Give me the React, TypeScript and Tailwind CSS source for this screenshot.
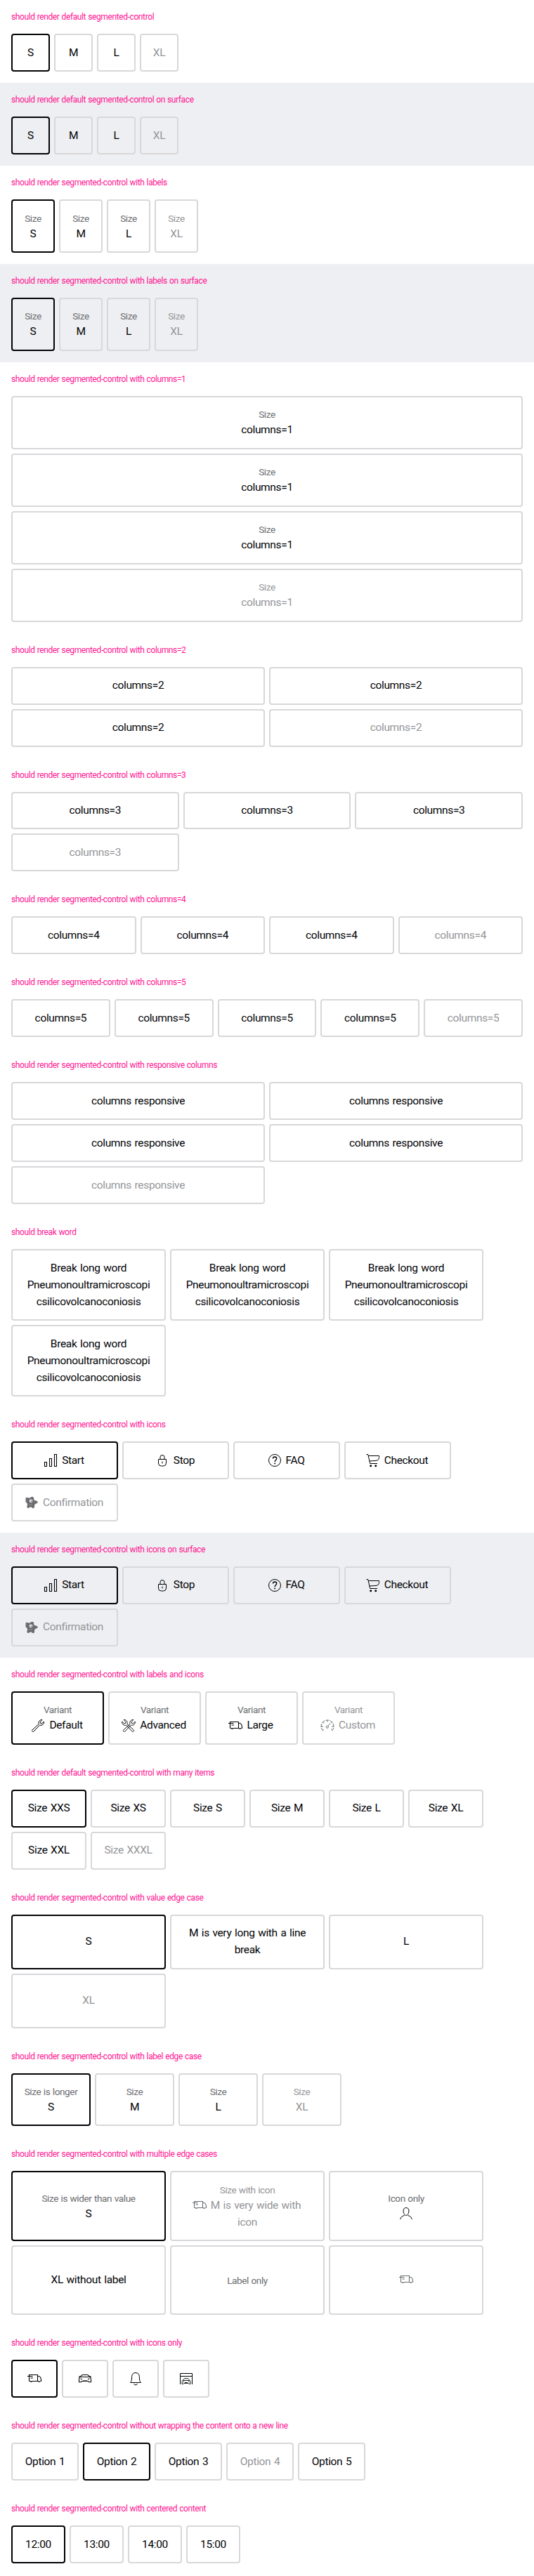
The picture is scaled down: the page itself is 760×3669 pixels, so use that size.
import type { ReactNode } from "react";
import clsx from "clsx";

type IconName =
  | "chart" | "lock" | "question" | "cart" | "star" | "wrench" | "wrenches"
  | "truck" | "gauge" | "user" | "car" | "bell" | "garage";

const wrenchPath =
  "M13.2 9.6c-.6-2.2 0-4 1.4-5.2 1-.8 2.2-1.1 3.400-.9l-2.700 2.900.4 2 2 .4 2.700-2.800c.4 1.500 0 3-1.200 4.100-1.300 1.200-3 1.500-4.700 1L6.100 20c-.6.6-1.500.6-2.100 0s-.6-1.500 0-2.100z";

const icons: Record<IconName, ReactNode> = {
  chart: (
    <path d="M3.5 14.500h3v6h-3zM10.500 9.500h3v11h-3zM17.500 3.500h3v17h-3z" strokeWidth="1.100" />
  ),
  lock: (
    <>
      <path d="M6.500 10.500h11v5.500a4 4 0 0 1-4 4h-3a4 4 0 0 1-4-4z" />
      <path d="M9 10.500V7.500a3 3 0 0 1 6 0v3M12 13.500v3" />
    </>
  ),
  question: (
    <>
      <circle cx="12" cy="12" r="8.500" />
      <path d="M9.500 9.600C9.500 8 10.500 7 12.100 7s2.600 1 2.600 2.400c0 2.100-2.500 2.200-2.500 4.600" strokeWidth="1.400" />
      <path d="M11.300 15.500h1.700v1.700h-1.700z" fill="currentColor" stroke="none" />
    </>
  ),
  cart: (
    <>
      <path d="M2.500 3.500h2.200L7.700 16.500H18M5.200 5.500h15.300v2c0 3-1.500 4.800-4.500 4.900l-9.200.6" />
      <circle cx="8.700" cy="19.800" r="1.500" fill="currentColor" stroke="none" />
      <circle cx="15.700" cy="19.800" r="1.500" fill="currentColor" stroke="none" />
    </>
  ),
  star: (
    <>
      <path
        d="M4.300 5.300L9 6.300 12.700 4.300 14.300 5l.7 4.100 5 1.700-.2 1.500-4.100 2.300-.4 4.400-1.400.6-3.200-2.200-3.600 2-1.200-.8.8-4.600L4 10.500z"
        fill="currentColor"
        stroke="currentColor"
        strokeWidth="1.200"
        strokeLinejoin="round"
      />
      <circle cx="11" cy="9.800" r="2.400" fill="#fff" opacity=".85" stroke="none" />
      <circle cx="11.600" cy="10.200" r=".9" fill="currentColor" stroke="none" />
      <path d="M8.500 14.500c1.500 1.200 3.500 1 4.500-.2" stroke="#fff" strokeWidth=".7" opacity=".4" />
    </>
  ),
  wrench: <path d={wrenchPath} />,
  wrenches: (
    <>
      <path d={wrenchPath} transform="translate(.8 0)" strokeWidth=".9" />
      <path d={wrenchPath} transform="matrix(-1 0 0 1 23.200 0)" strokeWidth=".9" />
    </>
  ),
  truck: (
    <path d="M4.500 15.500v-9h12v9M2 8.500h7.500M6.500 11h3.500M4.500 15.500h1.700M8.500 15.500h8.500M16.500 8.500h2c1.500 0 3 3 3 5.200v1.800h-1.200M6.300 15.500a1.200 1.200 0 0 0 2.300 0M17.400 15.500a1.200 1.200 0 0 0 2.300 0" strokeWidth="1.100" />
  ),
  gauge: (
    <>
      <path d="M6 19.300C4 17.700 3 15.500 3 13a9 9 0 0 1 18 0c0 2.500-1 4.700-3 6.300" strokeDasharray="5 1.200" />
      <path d="M12 4v2.500M5.500 6.800l1.700 1.700M18.500 6.800l-1.500 1.500M3.500 13H6M18 13h2.500M5.300 17.800l1.500-1M18.700 17.800l-1.500-1M12.700 12.500l3.300-4" />
      <circle cx="11.800" cy="13.700" r="1.600" />
    </>
  ),
  user: (
    <>
      <path d="M12 3.500c2.400 0 3.900 1.700 3.900 4.300 0 3.300-1.600 6.700-3.900 6.700s-3.900-3.400-3.900-6.700c0-2.600 1.500-4.300 3.900-4.300z" />
      <path d="M3.700 20c.5-2.700 2-4.500 5.700-5.500M20.300 20c-.5-2.700-2-4.500-5.700-5.500" />
    </>
  ),
  car: (
    <path d="M4.500 10L7 7.300c.6-.6 1.200-.8 2-.8h6c.8 0 1.400.2 2 .8L19.500 10c.8.800 1 1.700 1 2.800v4h-3l-1-1.300h-9l-1 1.300h-3v-4c0-1.100.2-2 1-2.800zM3 9h2.300M21 9h-2.300M5.500 9.500h13M5.500 12l2.500.7M18.500 12l-2.500.7M9 15h6" strokeWidth="1.100" />
  ),
  bell: (
    <path d="M4.500 17.500h15c-1.200-1.300-1.800-2.700-1.900-4.500l-.3-4.500c-.2-3-2-5-5.300-5s-5.100 2-5.300 5L6.400 13c-.1 1.800-.7 3.200-1.900 4.500zM9.500 19a2.600 2.600 0 0 0 5 0" />
  ),
  garage: (
    <>
      <path d="M3.500 20V4.500h17V20M3.500 8.500h17" />
      <path d="M7 14.500l1.500-2c.4-.6.800-.8 1.500-.8h4c.700 0 1.100.2 1.500.8l1.500 2c.8.5 1 1 1 2v3h-2l-.8-1h-6.400l-.8 1H6v-3c0-1 .2-1.500 1-2zM7 14.500h10M7.500 16.500h1.500M15 16.500h1.500M10 17.500h4" strokeWidth=".9" />
    </>
  ),
};

function Icon({ name, className }: { name: IconName; className?: string }) {
  return (
    <svg
      viewBox="0 0 24 24"
      fill="none"
      stroke="currentColor"
      className={clsx("-mt-[0.6px] inline-block size-6 shrink-0 align-top", className)}
    >
      {icons[name]}
    </svg>
  );
}

interface Item {
  text?: string;
  label?: string;
  icon?: IconName;
  selected?: boolean;
  disabled?: boolean;
  wrap?: boolean;
}

function Segment({ text, label, icon, selected, disabled, wrap }: Item) {
  return (
    <button
      type="button"
      className={clsx(
        "flex min-w-0 flex-col items-center justify-center rounded-[4px] border-2 pt-[13.6px] pb-[12.4px] text-center",
        wrap ? "px-[19px]" : "px-1",
        selected ? "border-[#010205]" : "border-[#d8d8db]",
        disabled ? "text-[#949598]" : "text-[#010205]",
      )}
    >
      {label && (
        <span className={clsx("text-[13.6px] leading-[22px] tracking-[-0.4px] [word-spacing:0.5px]", !disabled && "text-[#6b6d70]")}>
          {label}
        </span>
      )}
      {(text || icon) && (
        <span
          className={clsx(
            "w-full text-[15.5px] leading-[23.97px] tracking-[-0.34px] [word-spacing:1.1px]",
            wrap ? "break-words" : "whitespace-nowrap",
          )}
        >
          {icon && <Icon name={icon} className={clsx(text && "mr-1 -ml-1", disabled && "text-[#6b6d70]")} />}
          {text}
        </span>
      )}
    </button>
  );
}

function Section({ title, grid, items, surface }: { title: string; grid: string; items: Item[]; surface?: boolean }) {
  return (
    <section className={clsx("p-4", surface && "bg-[#eeeff2]")}>
      <h2 className="mb-4 text-[12px] leading-4 tracking-[-0.39px] text-[#ff1493] [word-spacing:0.5px]">{title}</h2>
      <div className={clsx("grid gap-[6px]", grid)}>
        {items.map((item, i) => (
          <Segment key={i} {...item} />
        ))}
      </div>
    </section>
  );
}

const repeat = (n: number, item: Item, lastDisabled = true): Item[] =>
  Array.from({ length: n }, (_, i) => ({ ...item, disabled: lastDisabled && i === n - 1 }));

const sizes: Item[] = [{ text: "S", selected: true }, { text: "M" }, { text: "L" }, { text: "XL", disabled: true }];
const labelled: Item[] = sizes.map((item) => ({ ...item, label: "Size" }));
const steps: Item[] = [
  { text: "Start", icon: "chart", selected: true },
  { text: "Stop", icon: "lock" },
  { text: "FAQ", icon: "question" },
  { text: "Checkout", icon: "cart" },
  { text: "Confirmation", icon: "star", disabled: true },
];

export default function App() {
  return (
    <main className="min-h-[3669px] w-[760px] bg-white font-['Roboto','Liberation_Sans',sans-serif]">
      <Section title="should render default segmented-control" grid="grid-cols-[repeat(4,55px)]" items={sizes} />
      <Section title="should render default segmented-control on surface" grid="grid-cols-[repeat(4,55px)]" items={sizes} surface />
      <Section title="should render segmented-control with labels" grid="grid-cols-[repeat(4,62px)]" items={labelled} />
      <Section title="should render segmented-control with labels on surface" grid="grid-cols-[repeat(4,62px)]" items={labelled} surface />
      <Section title="should render segmented-control with columns=1" grid="grid-cols-1" items={repeat(4, { text: "columns=1", label: "Size" })} />
      <Section title="should render segmented-control with columns=2" grid="grid-cols-2" items={repeat(4, { text: "columns=2" })} />
      <Section title="should render segmented-control with columns=3" grid="grid-cols-3" items={repeat(4, { text: "columns=3" })} />
      <Section title="should render segmented-control with columns=4" grid="grid-cols-4" items={repeat(4, { text: "columns=4" })} />
      <Section title="should render segmented-control with columns=5" grid="grid-cols-5" items={repeat(5, { text: "columns=5" })} />
      <Section title="should render segmented-control with responsive columns" grid="grid-cols-2" items={repeat(5, { text: "columns responsive" })} />
      <Section
        title="should break word"
        grid="grid-cols-[repeat(3,220px)]"
        items={repeat(4, { text: "Break long word Pneumonoultramicroscopicsilicovolcanoconiosis", wrap: true }, false)}
      />
      <Section title="should render segmented-control with icons" grid="grid-cols-[repeat(4,152px)]" items={steps} />
      <Section title="should render segmented-control with icons on surface" grid="grid-cols-[repeat(4,152px)]" items={steps} surface />
      <Section
        title="should render segmented-control with labels and icons"
        grid="grid-cols-[repeat(4,132px)]"
        items={[
          { text: "Default", label: "Variant", icon: "wrench", selected: true },
          { text: "Advanced", label: "Variant", icon: "wrenches" },
          { text: "Large", label: "Variant", icon: "truck" },
          { text: "Custom", label: "Variant", icon: "gauge", disabled: true },
        ]}
      />
      <Section
        title="should render default segmented-control with many items"
        grid="grid-cols-[repeat(6,107px)]"
        items={[
          { text: "Size XXS", selected: true },
          { text: "Size XS" },
          { text: "Size S" },
          { text: "Size M" },
          { text: "Size L" },
          { text: "Size XL" },
          { text: "Size XXL" },
          { text: "Size XXXL", disabled: true },
        ]}
      />
      <Section
        title="should render segmented-control with value edge case"
        grid="grid-cols-[repeat(3,220px)] auto-rows-fr"
        items={[
          { text: "S", selected: true },
          { text: "M is very long with a line break", wrap: true },
          { text: "L" },
          { text: "XL", disabled: true },
        ]}
      />
      <Section
        title="should render segmented-control with label edge case"
        grid="grid-cols-[repeat(4,113px)]"
        items={[{ text: "S", label: "Size is longer", selected: true }, ...labelled.slice(1)]}
      />
      <Section
        title="should render segmented-control with multiple edge cases"
        grid="grid-cols-[repeat(3,220px)] auto-rows-[99.3px]"
        items={[
          { text: "S", label: "Size is wider than value", selected: true },
          { text: "M is very wide with icon", label: "Size with icon", icon: "truck", disabled: true, wrap: true },
          { label: "Icon only", icon: "user" },
          { text: "XL without label" },
          { label: "Label only" },
          { icon: "truck", disabled: true },
        ]}
      />
      <Section
        title="should render segmented-control with icons only"
        grid="grid-cols-[repeat(4,66px)]"
        items={[{ icon: "truck", selected: true }, { icon: "car" }, { icon: "bell" }, { icon: "garage" }]}
      />
      <Section
        title="should render segmented-control without wrapping the content onto a new line"
        grid="grid-cols-[repeat(5,96px)]"
        items={[
          { text: "Option 1" },
          { text: "Option 2", selected: true },
          { text: "Option 3" },
          { text: "Option 4", disabled: true },
          { text: "Option 5" },
        ]}
      />
      <Section
        title="should render segmented-control with centered content"
        grid="grid-cols-[repeat(4,77px)]"
        items={[{ text: "12:00", selected: true }, { text: "13:00" }, { text: "14:00" }, { text: "15:00" }]}
      />
    </main>
  );
}
